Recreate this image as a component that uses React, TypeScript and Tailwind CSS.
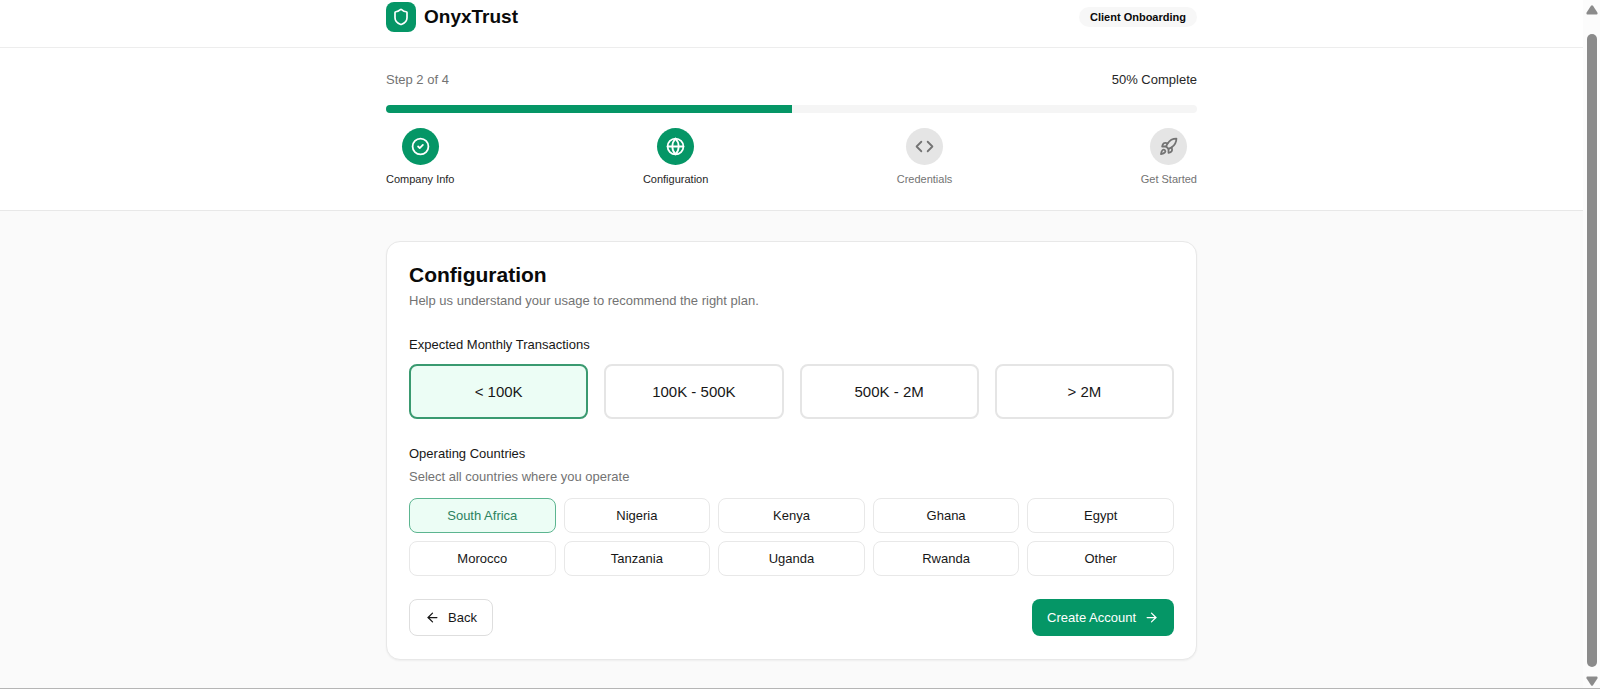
import { useState } from "react"
import { ArrowLeft, ArrowRight, CircleCheck, Code, Globe, Rocket, Shield } from "lucide-react"

const steps = [
  { label: "Company Info", icon: CircleCheck },
  { label: "Configuration", icon: Globe },
  { label: "Credentials", icon: Code },
  { label: "Get Started", icon: Rocket },
]

const volumes = ["< 100K", "100K - 500K", "500K - 2M", "> 2M"]

const countries = [
  "South Africa",
  "Nigeria",
  "Kenya",
  "Ghana",
  "Egypt",
  "Morocco",
  "Tanzania",
  "Uganda",
  "Rwanda",
  "Other",
]

const currentStep = 2

function Header() {
  return (
    <header className="border-b border-[#ededed] bg-white">
      <div className="mx-auto flex max-w-[859px] items-center justify-between px-6 pt-[2px] pb-[15px]">
        <div className="flex items-center gap-2">
          <div className="flex h-[30px] w-[30px] items-center justify-center rounded-lg bg-[#059666]">
            <Shield className="h-[18px] w-[18px] text-white" strokeWidth={2.25} />
          </div>
          <span className="text-[19px] leading-[28px] font-bold text-neutral-950">OnyxTrust</span>
        </div>
        <span className="rounded-full bg-[#f7f7f7] px-[11px] text-[11px] leading-[20px] font-bold text-neutral-950">
          Client Onboarding
        </span>
      </div>
    </header>
  )
}

function Progress() {
  const percent = (currentStep / steps.length) * 100

  return (
    <section className="border-b border-[#e8e8e8] bg-white">
      <div className="mx-auto max-w-[859px] px-6 pt-[22px] pb-[23px]">
        <div className="flex items-center justify-between text-[13px] leading-[20px]">
          <span className="text-neutral-500">
            Step {currentStep} of {steps.length}
          </span>
          <span className="text-neutral-800">{percent}% Complete</span>
        </div>
        <div
          role="progressbar"
          aria-label="Onboarding progress"
          aria-valuenow={percent}
          className="mt-[15px] h-[8px] overflow-hidden rounded-full bg-neutral-100"
        >
          <div className="h-full bg-[#059666]" style={{ width: `${percent}%` }} />
        </div>
        <ol className="mt-[15px] flex justify-between">
          {steps.map((step, index) => {
            const reached = index < currentStep
            return (
              <li key={step.label} className="flex flex-col items-center gap-[6px]">
                <div
                  className={
                    reached
                      ? "flex h-[37px] w-[37px] items-center justify-center rounded-full bg-[#059666] text-white"
                      : "flex h-[37px] w-[37px] items-center justify-center rounded-full bg-[#e5e5e5] text-neutral-500"
                  }
                >
                  <step.icon className="h-[19px] w-[19px]" strokeWidth={2.25} />
                </div>
                <span
                  className={
                    reached
                      ? "text-[11px] leading-[16px] text-neutral-800"
                      : "text-[11px] leading-[16px] text-neutral-500"
                  }
                >
                  {step.label}
                </span>
              </li>
            )
          })}
        </ol>
      </div>
    </section>
  )
}

function ConfigurationCard() {
  const [volume, setVolume] = useState("< 100K")
  const [selected, setSelected] = useState(["South Africa"])

  const toggleCountry = (country: string) => {
    setSelected((prev) => (prev.includes(country) ? prev.filter((c) => c !== country) : [...prev, country]))
  }

  return (
    <div className="rounded-[14px] border border-[#e8e8e8] bg-white px-[22px] pt-[17px] pb-[23px] shadow-xs">
      <h1 className="text-[21px] leading-[32px] font-bold text-neutral-950">Configuration</h1>
      <p className="text-[13px] leading-[20px] text-neutral-500">
        Help us understand your usage to recommend the right plan.
      </p>

      <div className="mt-6">
        <h2 className="text-[13px] leading-[20px] text-neutral-900">Expected Monthly Transactions</h2>
        <div className="mt-[9px] grid grid-cols-2 gap-4 md:grid-cols-4">
          {volumes.map((item) => (
            <button
              key={item}
              type="button"
              aria-pressed={item === volume}
              onClick={() => setVolume(item)}
              className={
                item === volume
                  ? "rounded-lg border-2 border-[#3a9a70] bg-[#ecfdf5] py-4 text-[15px] leading-[19px] text-neutral-900"
                  : "rounded-lg border-2 border-[#e5e5e5] bg-white py-4 text-[15px] leading-[19px] text-neutral-900"
              }
            >
              {item}
            </button>
          ))}
        </div>
      </div>

      <div className="mt-[25px]">
        <h2 className="text-[13px] leading-[20px] text-neutral-900">Operating Countries</h2>
        <p className="mt-[3px] text-[13px] leading-[20px] text-neutral-500">Select all countries where you operate</p>
        <div className="mt-[11px] grid grid-cols-2 gap-2 md:grid-cols-5">
          {countries.map((country) => (
            <button
              key={country}
              type="button"
              aria-pressed={selected.includes(country)}
              onClick={() => toggleCountry(country)}
              className={
                selected.includes(country)
                  ? "rounded-lg border border-[#5cb590] bg-[#ecfdf5] py-[7px] text-[13px] leading-[19px] text-[#2c8260]"
                  : "rounded-lg border border-[#e8e8e8] bg-white py-[7px] text-[13px] leading-[19px] text-neutral-900"
              }
            >
              {country}
            </button>
          ))}
        </div>
      </div>

      <div className="mt-[23px] flex justify-between">
        <button
          type="button"
          className="flex h-[37px] items-center gap-2 rounded-lg border border-[#dedede] bg-white px-[15px] text-[13px] leading-[19px] text-neutral-900"
        >
          <ArrowLeft className="h-[15px] w-[15px]" />
          Back
        </button>
        <button
          type="button"
          className="flex h-[37px] items-center gap-2 rounded-lg bg-[#059666] px-[15px] text-[13px] leading-[19px] text-white"
        >
          Create Account
          <ArrowRight className="h-[15px] w-[15px]" />
        </button>
      </div>
    </div>
  )
}

function ScrollRail() {
  return (
    <div aria-hidden="true" className="flex w-[17px] shrink-0 flex-col items-center bg-[#fcfcfc] pt-[5px] pb-[2px]">
      <svg viewBox="0 0 12 10" className="h-[10px] w-3 fill-[#8b8b8b]">
        <path d="M5 .8Q6 -.3 7 .8L11.4 7.6Q12 9.4 10.6 9.5H1.4Q0 9.4 .6 7.6Z" />
      </svg>
      <div className="mt-[19px] mb-[9px] w-[10px] grow rounded-full bg-[#8b8b8b]" />
      <svg viewBox="0 0 12 10" className="h-[10px] w-3 fill-[#8b8b8b]">
        <path d="M5 9.2Q6 10.3 7 9.2L11.4 2.4Q12 .6 10.6 .5H1.4Q0 .6 .6 2.4Z" />
      </svg>
    </div>
  )
}

export default function App() {
  return (
    <div className="flex min-h-screen border-b border-[#b5b5b5] bg-[#fafafa] font-['Liberation_Sans',Arial,sans-serif]">
      <div className="min-w-0 grow">
        <Header />
        <Progress />
        <main className="mx-auto max-w-[859px] px-6 pt-[30px] pb-7">
          <ConfigurationCard />
        </main>
      </div>
      <ScrollRail />
    </div>
  )
}
